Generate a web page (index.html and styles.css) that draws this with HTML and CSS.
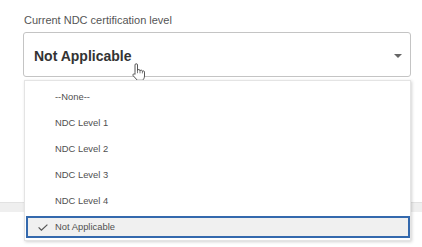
FILE: index.html
```html
<!DOCTYPE html>
<html lang="en">
<head>
    <meta charset="UTF-8">
    <meta name="viewport" content="width=device-width, initial-scale=1.0">
    <title>Certification level</title>
    <link rel="stylesheet" href="styles.css">
</head>
<body>

<div class="field">
    <label class="field-label">Current NDC certification level</label>
    <div class="select">
        <span class="select-value">Not Applicable</span>
        <span class="select-arrow"></span>
        <svg class="cursor" width="13" height="18" viewBox="0 0 13 18">
            <path d="M3 9.5V2a1.25 1.25 0 0 1 2.5 0v5.6a1.25 1.25 0 0 1 2.5 0.3a1.25 1.25 0 0 1 2.4 0.5a1.15 1.15 0 0 1 2.1 0.7V13c0 2-1 3.3-2 4.3H5.4L1.1 12.6a1.15 1.15 0 0 1 1.7-1.5L3 11.3z" fill="#fff" stroke="#444" stroke-width="0.9" stroke-linejoin="round"/>
            <path d="M5.5 7.6v2.6M8 7.9v2.4M10.4 8.4v2" stroke="#444" stroke-width="0.7" fill="none"/>
        </svg>
    </div>

    <ul class="dropdown">
        <li>--None--</li>
        <li>NDC Level 1</li>
        <li>NDC Level 2</li>
        <li>NDC Level 3</li>
        <li>NDC Level 4</li>
        <li class="selected">
            <svg class="check" width="10" height="7" viewBox="0 0 10 7">
                <path d="M0.6 3.4L3.4 6.2L9.4 0.6" stroke="#555" stroke-width="1.2" fill="none"/>
            </svg>
            Not Applicable
        </li>
    </ul>
</div>

<div class="footer-bar"></div>

</body>
</html>
```

FILE: styles.css
```css
html, body {
    height: 100%;
}
body {
    font-family: 'Liberation Sans', Arial, sans-serif;
    background: #fff;
    margin: 0;
    color: #555;
    min-height: 247px;
}
.field {
    position: relative;
    padding: 14px 11px 0 23px;
}
.field-label {
    display: block;
    font-size: 11px;
    line-height: 13px;
    color: #555;
    margin-bottom: 5px;
    padding-left: 1px;
}
.select {
    position: relative;
    display: flex;
    align-items: center;
    justify-content: space-between;
    height: 43px;
    border: 1px solid #c4c4c4;
    border-radius: 3px;
    padding: 0 8px 0 10px;
}
.select-value {
    font-size: 14px;
    font-weight: bold;
    color: #333;
    padding-top: 2px;
}
.select-arrow {
    width: 0;
    height: 0;
    border-left: 4px solid transparent;
    border-right: 4px solid transparent;
    border-top: 4px solid #666;
    margin-top: 2px;
}
.cursor {
    position: absolute;
    left: 108px;
    top: 30px;
}
.dropdown {
    position: absolute;
    top: 80px;
    left: 24px;
    right: 11px;
    margin: 0;
    padding: 3px 0 2px;
    list-style: none;
    background: #fff;
    border: 1px solid #e4e4e4;
    box-shadow: 1px 1px 3px rgba(0, 0, 0, 0.18);
    z-index: 2;
}
.dropdown li {
    height: 26px;
    line-height: 26px;
    font-size: 9.4px;
    padding-left: 30px;
    color: #505050;
}
.dropdown li.selected {
    position: relative;
    height: 18px;
    line-height: 18px;
    margin: 2px 0 0 1px;
    padding-left: 27px;
    border: 2px solid #3469ad;
    background: #f0f0f0;
}
.check {
    position: absolute;
    left: 10px;
    top: 6px;
}
.footer-bar {
    margin-top: 125px;
    height: 9px;
    background: #efefef;
    border-top: 1px solid #e2e2e2;
}
```
